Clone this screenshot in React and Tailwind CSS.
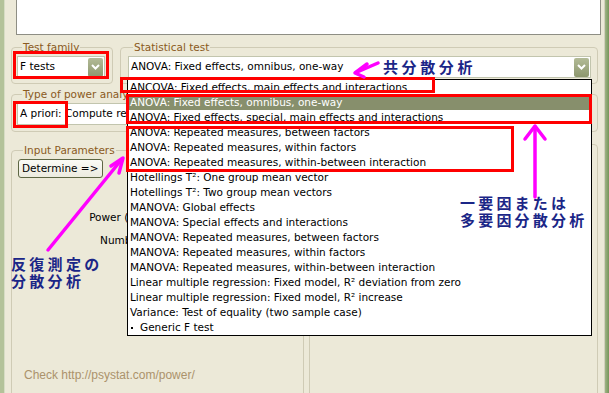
import React from "react";

const items = [
  "ANCOVA: Fixed effects, main effects and interactions",
  "ANOVA: Fixed effects, omnibus, one-way",
  "ANOVA: Fixed effects, special, main effects and interactions",
  "ANOVA: Repeated measures, between factors",
  "ANOVA: Repeated measures, within factors",
  "ANOVA: Repeated measures, within-between interaction",
  "Hotellings T²: One group mean vector",
  "Hotellings T²: Two group mean vectors",
  "MANOVA: Global effects",
  "MANOVA: Special effects and interactions",
  "MANOVA: Repeated measures, between factors",
  "MANOVA: Repeated measures, within factors",
  "MANOVA: Repeated measures, within-between interaction",
  "Linear multiple regression: Fixed model, R² deviation from zero",
  "Linear multiple regression: Fixed model, R² increase",
  "Variance: Test of equality (two sample case)",
];

function DropBtn() {
  return (
    <div className="w-[15px] h-[19px] shrink-0 rounded-[2px] bg-gradient-to-b from-[#b3bb97] to-[#8d976e] flex items-center justify-center">
      <svg width="9" height="6" viewBox="0 0 9 6">
        <path d="M1 1 L4.5 4.5 L8 1" stroke="white" strokeWidth="2" fill="none" />
      </svg>
    </div>
  );
}

function Legend({ children }) {
  return (
    <legend className="ml-[5px] px-[1px] leading-[12px] text-[#8a5a22] whitespace-nowrap">
      {children}
    </legend>
  );
}

export default function App() {
  return (
    <div className="relative w-[609px] h-[393px] overflow-hidden bg-[#ECE9D8] flex font-['DejaVu_Sans',sans-serif] text-[10.5px] text-black">
      <div className="w-[4px] shrink-0 bg-[#b3c299]" />
      <div className="w-[1px] shrink-0 bg-[#d6dcc4]" />
      <div className="w-[599px] shrink-0 flex flex-col pl-[6px] pr-[6px]">
        {/* top white panel */}
        <div className="ml-[5px] w-[585px] h-[35px] shrink-0 bg-white border-l border-r border-b border-[#8e8e84]" />

        {/* row 1 */}
        <div className="flex mt-[6px] shrink-0">
          <fieldset className="w-[102px] border border-[#cfcbb5] rounded-[4px] px-[5px] pt-[3px] pb-[5px]">
            <Legend>Test family</Legend>
            <div className="w-[88px] h-[22px] bg-white border border-[#c2c5ae] flex items-center justify-between pl-[2px] pr-[1px]">
              <span>F tests</span>
              <DropBtn />
            </div>
          </fieldset>
          <fieldset className="ml-[7px] flex-1 border border-[#cfcbb5] rounded-[4px] pl-[7px] pr-[6px] pt-[3px] pb-[5px]">
            <Legend>Statistical test</Legend>
            <div className="h-[22px] bg-white border border-[#c2c5ae] flex items-center justify-between pl-[2px] pr-[1px]">
              <span>ANOVA: Fixed effects, omnibus, one-way</span>
              <DropBtn />
            </div>
          </fieldset>
        </div>

        {/* row 2 */}
        <fieldset className="mt-[4px] shrink-0 border border-[#cfcbb5] rounded-[4px] px-[5px] pt-[3px] pb-[6px]">
          <Legend>Type of power analysis</Legend>
          <div className="w-[574px] h-[22px] bg-white border border-[#c2c5ae] flex items-center justify-between pl-[2px] pr-[1px]">
            <span>A priori: Compute required sample size</span>
            <DropBtn />
          </div>
        </fieldset>

        {/* row 3 */}
        <div className="flex mt-[12px] shrink-0">
          <fieldset className="w-[293px] h-[260px] border border-[#cfcbb5] rounded-[4px] pl-[6px] pt-[3px] flex flex-col">
            <Legend>Input Parameters</Legend>
            <div className="h-[19px] flex items-center">
              <div className="w-[85px] h-[19px] border border-[#5d6643] rounded-[3px] bg-gradient-to-b from-[#fbfbf6] to-[#ecebdf] flex items-center pl-[3px]">
                Determine =&gt;
              </div>
            </div>
            <div className="mt-[28px] w-[177px] text-right whitespace-nowrap">
              <div className="h-[23px] leading-[23px]">Power (1-β err prob)</div>
              <div className="h-[23px] leading-[23px]">Number of groups</div>
            </div>
            <div className="mt-[116px] pl-[6px] leading-[14px] font-['Liberation_Sans',sans-serif] text-[12px] text-[#ab926b] whitespace-nowrap">
              Check http://psystat.com/power/
            </div>
          </fieldset>
          <fieldset className="ml-[5px] flex-1 h-[260px] border border-[#cfcbb5] rounded-[4px]" />
        </div>
      </div>
      <div className="w-[1px] shrink-0 bg-[#d3d0bd]" />
      <div className="w-[5px] shrink-0 bg-gradient-to-r from-[#9fb486] to-[#6d8c4f]" />

      {/* dropdown list */}
      <div className="absolute left-[127px] top-[79px] w-[465px] border border-black bg-white">
        {items.map((t, i) => (
          <div
            key={i}
            className={
              "h-[15px] leading-[15px] pl-[2px] whitespace-nowrap " +
              (i === 1 ? "bg-[#878f6c] text-white" : "")
            }
          >
            {t}
          </div>
        ))}
        <div className="h-[15px] leading-[15px] pl-[3px] flex items-center whitespace-nowrap">
          <span className="w-[2px] h-[2px] bg-black mr-[7px]" />
          <span>Generic F test</span>
        </div>
      </div>

      {/* red annotation boxes */}
      <div className="absolute left-[13px] top-[51px] w-[96px] h-[28px] border-[3px] border-[#ff0000]" />
      <div className="absolute left-[13px] top-[101px] w-[55px] h-[27px] border-[3px] border-[#ff0000]" />
      <div className="absolute left-[120px] top-[77px] w-[315px] h-[16px] border-[3px] border-[#ff0000]" />
      <div className="absolute left-[126px] top-[94px] w-[466px] h-[30px] border-[3px] border-[#ff0000]" />
      <div className="absolute left-[126px] top-[126px] w-[388px] h-[46px] border-[3px] border-[#ff0000]" />

      {/* magenta arrows */}
      <svg className="absolute left-0 top-0" width="609" height="393" viewBox="0 0 609 393">
        <g stroke="#ff00ff" strokeWidth="3.5" fill="none" strokeLinecap="round" strokeLinejoin="round">
          <path d="M378 63 L356 72.5" />
          <path d="M367 64 L355 73 L364 77" />
          <path d="M48 250 L122 159" />
          <path d="M111 166 L123 158 L119 173" />
          <path d="M535 197 L535 127" />
          <path d="M525 139 L535 126 L545 139" />
        </g>
      </svg>

      {/* Japanese annotations */}
      <div className="absolute left-[383px] top-[58px] leading-[17px] text-[15px] font-bold tracking-[3.6px] text-[#1b2687] font-['Noto_Sans_CJK_JP',sans-serif] whitespace-nowrap">
        共分散分析
      </div>
      <div className="absolute left-[460px] top-[195px] leading-[16.5px] text-[15px] font-bold tracking-[3.2px] text-[#1b2687] font-['Noto_Sans_CJK_JP',sans-serif] whitespace-nowrap">
        <div>一要因または</div>
        <div>多要因分散分析</div>
      </div>
      <div className="absolute left-[11px] top-[255px] leading-[17px] text-[15px] font-bold tracking-[3.3px] text-[#1b2687] font-['Noto_Sans_CJK_JP',sans-serif] whitespace-nowrap">
        <div>反復測定の</div>
        <div>分散分析</div>
      </div>
    </div>
  );
}
